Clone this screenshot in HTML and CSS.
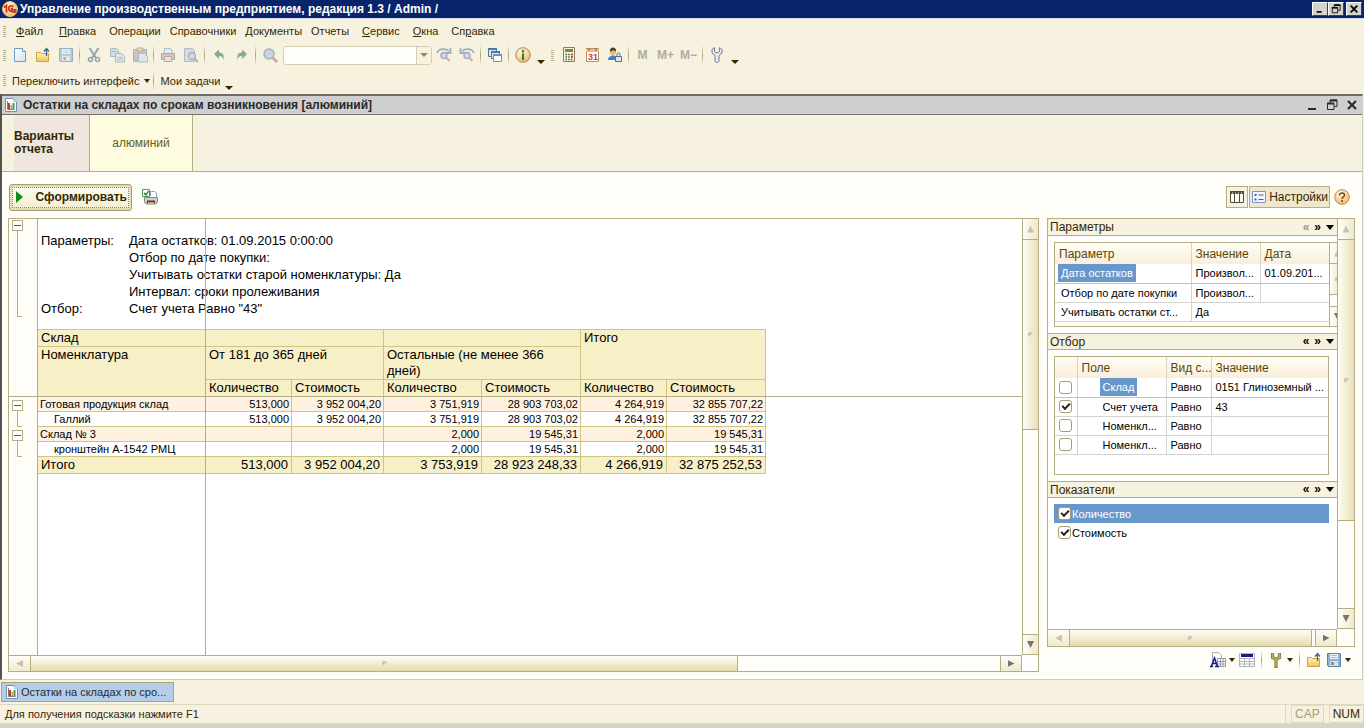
FILE: index.html
```html
<!DOCTYPE html>
<html lang="ru">
<head>
<meta charset="utf-8">
<title>Управление производственным предприятием</title>
<link rel="stylesheet" href="styles.css">
</head>
<body>
<svg class="defs" aria-hidden="true">
  <defs>
    <linearGradient id="paper" x1="0" y1="0" x2="1" y2="1"><stop offset="0" stop-color="#fff"/><stop offset="1" stop-color="#cfe3f5"/></linearGradient>
    <linearGradient id="gold" x1="0" y1="0" x2="0" y2="1"><stop offset="0" stop-color="#fff3c4"/><stop offset="1" stop-color="#eec35c"/></linearGradient>
    <radialGradient id="orb" cx=".4" cy=".3" r=".8"><stop offset="0" stop-color="#fffbe8"/><stop offset="1" stop-color="#eeaf5e"/></radialGradient>
    <symbol id="i-report" viewBox="0 0 12 14"><path d="M.5.5h8l3 3v10H.5z" fill="#fff" stroke="#6f8fb5"/><path d="M8.500.5v3h3" fill="#dbe8f6" stroke="#a9c2de"/><path d="M2.500 3v8.500h7" fill="none" stroke="#8c7b6d"/><path d="M3 5h2v6H3z" fill="#c33b2a"/><path d="M5.500 7h1.500v4H5.500z" fill="#dd8a63"/><path d="M7.500 5h2v6h-2z" fill="#3f9b4a"/></symbol>
    <symbol id="i-folder" viewBox="0 0 16 16"><path d="M1.500 5.500h4l1 1h7v8h-12z" fill="url(#gold)" stroke="#d3a23c"/><path d="M11.500 9V2M9 4.500 11.500 1.500 14 4.500" fill="none" stroke="#3d6688" stroke-width="1.300"/></symbol>
    <symbol id="i-save" viewBox="0 0 16 16"><path d="M1.500 1.500h13v13h-12l-1-1z" fill="#8db1d3" stroke="#5c83aa"/><path d="M4 2h8v5H4z" fill="#eef4fa"/><path d="M5 3.500h6M5 5.500h6" stroke="#9fb9d1"/><path d="M4 9h8v5H4z" fill="#d7e4e2"/><path d="M5.500 10h2v3h-2z" fill="#557591"/></symbol>
    <symbol id="i-findagain" viewBox="0 0 16 16"><path d="M1 6C3 1.500 9 1 13 4M14.500 1v5H9.500" fill="none" stroke="#6787a8" stroke-width="1.800"/><circle cx="8" cy="8.500" r="3" fill="#b9cae6" stroke="#6f7fac" stroke-width="1.400"/><path d="m10.500 11 3 3" stroke="#a88378" stroke-width="2"/></symbol>
    <symbol id="i-restore" viewBox="0 0 12 12"><path d="M4 1h7v6.500H8.500M4 1v3M1.500 4.500h6.500v6H1.500z" fill="none" stroke="currentColor" stroke-width="1"/><path d="M4 1.500h7M1 4.500h7" stroke="currentColor" stroke-width="2"/></symbol>
    <symbol id="i-cross" viewBox="0 0 12 12"><path d="m2 2 8 8M10 2l-8 8" stroke="currentColor" stroke-width="2.200"/></symbol>
  </defs>
</svg>

<header class="titlebar">
  <svg class="logo" viewBox="0 0 16 16"><circle cx="8" cy="8" r="7.500" fill="url(#orb)" stroke="#f5c451"/><path d="M2 6.500 4.500 4.500v7M11.500 5.500C8 3.500 6.500 6 6.800 8s2.700 3 7.700 2.800M11 7.500C8.500 7 8.500 9 14.500 8.800" fill="none" stroke="#d52b1c" stroke-width="1.700"/></svg>
  <h1>Управление производственным предприятием, редакция 1.3 / Admin /</h1>
  <div class="sysbuttons">
    <button aria-label="Свернуть"><svg viewBox="0 0 12 12"><path d="M2 9.500h6" stroke="#000" stroke-width="2"/></svg></button>
    <button aria-label="Восстановить"><svg><use href="#i-restore"/></svg></button>
    <button class="apart" aria-label="Закрыть"><svg><use href="#i-cross"/></svg></button>
  </div>
</header>

<nav class="bar menu">
  <span class="grip"></span>
  <button class="lead"><u>Ф</u>айл</button><button><u>П</u>равка</button><button class="tight">Операции</button><button class="tight">Справочники</button><button class="tight">Документы</button><button>Отчеты</button><button><u>С</u>ервис</button><button><u>О</u>кна</button><button>Сп<u>р</u>авка</button>
</nav>

<div class="bar tools">
  <span class="grip"></span>
  <button aria-label="Новый"><svg viewBox="0 0 16 16"><path d="M2.500 1.500h8l3 3v10h-11z" fill="url(#paper)" stroke="#6f9cc4"/><path d="M10.500 1.500v3h3" fill="#fff" stroke="#6f9cc4"/></svg></button>
  <button aria-label="Открыть"><svg><use href="#i-folder"/></svg></button>
  <button class="off" aria-label="Сохранить"><svg><use href="#i-save"/></svg></button>
  <span class="sep"></span>
  <button class="off" aria-label="Вырезать"><svg viewBox="0 0 16 16"><path d="M3.500 1 10 11M12.500 1 6 11" stroke="#4d7295" stroke-width="2"/><circle cx="4.500" cy="12.500" r="2" fill="none" stroke="#4d7295" stroke-width="1.500"/><circle cx="11.500" cy="12.500" r="2" fill="none" stroke="#4d7295" stroke-width="1.500"/></svg></button>
  <button class="off" aria-label="Копировать"><svg viewBox="0 0 16 16"><path d="M1.500 1.500h6l2 2v6h-8z" fill="#bcd0e8" stroke="#7895bb"/><path d="M6.500 6.500h6l3 3v5.500h-9z" fill="#d4e1f0" stroke="#7895bb"/><path d="M8.500 10.500h5M8.500 12.500h5M3 4.500h4" stroke="#7895bb"/></svg></button>
  <button class="off" aria-label="Вставить"><svg viewBox="0 0 16 16"><path d="M1.500 2.500h13v12h-13z" fill="#a5a5b3" stroke="#8a8492"/><path d="M5 1h6v3H5z" fill="#d7cba7" stroke="#94886d"/><path d="M6.500 6.500h6l3 3v5.500h-9z" fill="#d4e1f0" stroke="#7895bb"/></svg></button>
  <span class="sep"></span>
  <button class="off" aria-label="Печать"><svg viewBox="0 0 16 16"><path d="M4.500 6V1.500h6l1.500 1.500v3" fill="#dceafb" stroke="#7697bd"/><path d="M1.500 6.500h13v6h-13z" fill="#bda8a8" stroke="#8a7a82"/><path d="M4.500 9.500h7v5h-7z" fill="#ead9d0" stroke="#8a7a82"/></svg></button>
  <button class="off" aria-label="Просмотр"><svg viewBox="0 0 16 16"><path d="M1.500 1.500h8l2 2v11h-10z" fill="#c3d0df" stroke="#8297b3"/><circle cx="9" cy="9" r="3.500" fill="#b9cae6" stroke="#6f7fac" stroke-width="1.300"/><path d="m11.500 11.500 3.500 3.500" stroke="#a87868" stroke-width="2"/></svg></button>
  <span class="sep"></span>
  <button class="off" aria-label="Отменить"><svg viewBox="0 0 16 16"><path d="M3 7 8 2.500v3C12 5.500 13.500 8 12.500 13 12 10 11 9 8 9v3z" fill="#457a60"/></svg></button>
  <button class="off" aria-label="Вернуть"><svg viewBox="0 0 16 16"><path d="M13 7 8 2.500v3C4 5.500 2.500 8 3.500 13 4 10 5 9 8 9v3z" fill="#457a60"/></svg></button>
  <span class="sep"></span>
  <button class="off" aria-label="Найти"><svg viewBox="0 0 16 16"><circle cx="7" cy="7" r="5" fill="#a9bfe2" stroke="#7286b4" stroke-width="1.500"/><path d="m10.500 10.500 4.500 4.500" stroke="#a87868" stroke-width="2.500"/></svg></button>
  <div class="combo"><input type="text" aria-label="Поиск"><button aria-label="Список"><i class="down"></i></button></div>
  <button class="off" aria-label="Найти далее"><svg><use href="#i-findagain"/></svg></button>
  <button class="off" aria-label="Найти ранее"><svg viewBox="0 0 16 16"><path d="M15 6C13 1.500 7 1 3 4M1.500 1v5h5" fill="none" stroke="#6787a8" stroke-width="1.800"/><circle cx="8" cy="8.500" r="3" fill="#b9cae6" stroke="#6f7fac" stroke-width="1.400"/><path d="m10.500 11 3 3" stroke="#a88378" stroke-width="2"/></svg></button>
  <span class="sep"></span>
  <button aria-label="Окна"><svg viewBox="0 0 16 16"><path d="M1.500 1.500h8v8h-8z" fill="#d7e6f4" stroke="#54799d"/><path d="M1 2h9" stroke="#54799d" stroke-width="2"/><path d="M4.500 4.500h8v7h-8z" fill="#e7f0f8" stroke="#54799d"/><path d="M4 5h9" stroke="#54799d" stroke-width="2"/><path d="M6.500 7.500h8v7h-8z" fill="#fff" stroke="#6f93b5"/><path d="M6 8h9" stroke="#6f93b5" stroke-width="2"/></svg></button>
  <span class="sep"></span>
  <button aria-label="Справка"><svg viewBox="0 0 16 16"><circle cx="8" cy="8" r="7.300" fill="url(#orb)" stroke="#a98b5a"/><path d="M8 3v2.500M8 6.500v6.500" stroke="#3f7d2c" stroke-width="2.200"/></svg></button>
  <button class="more" aria-label="Ещё"><i class="down"></i></button>
  <span class="grip second"></span>
  <button aria-label="Калькулятор"><svg viewBox="0 0 16 16"><path d="M2.500.5h11v14h-11z" fill="#fff2dc" stroke="#8d7b68"/><path d="M4 2h8v3H4z" fill="#5f9748"/><path d="M4.500 7.500h7M4.500 10h7M4.500 12.500h7" stroke="#2f6b2f" stroke-width="1.500" stroke-dasharray="1.500 1.200"/><path d="M10 7.500h2M10 10h2" stroke="#c84b2f" stroke-width="1.500"/></svg></button>
  <button aria-label="Календарь"><svg viewBox="0 0 16 16"><path d="M2.500 1.500h12v13h-12z" fill="#fff" stroke="#b98c66"/><path d="M2 2h13v3H2z" fill="#e9c08d"/><path d="M5 1v3M12 1v3" stroke="#8c6040"/><text x="4" y="13" class="cal">31</text></svg></button>
  <button aria-label="Пользователь"><svg viewBox="0 0 16 16"><circle cx="6" cy="5" r="3" fill="#f0b86c"/><path d="M3 5c-1-6 7-6 6 0C8 3 5 3 3 5z" fill="#513b2c"/><path d="M1 13c0-6 10-6 10 0z" fill="#3f86b8"/><path d="M8.500 9.500h6v5h-6z" fill="#dce6f1" stroke="#536f91"/><path d="M10 9V7c0-1.500 3-1.500 3 0v2" fill="none" stroke="#536f91"/></svg></button>
  <span class="sep"></span>
  <button class="mem">M</button><button class="mem">M+</button><button class="mem">M−</button>
  <span class="sep"></span>
  <button aria-label="Настройка"><svg viewBox="0 0 16 16"><path d="M5.500.6 3 2.500v3.500L6 8.500V14c0 2 4 2 4 0V8.500L13 6V2.500L10.500.6V4.500L9 5.500H7l-1.500-1z" fill="#e4e7ee" stroke="#7a7f8c"/></svg></button>
  <button class="more" aria-label="Ещё"><i class="down"></i></button>
</div>

<div class="bar tasks">
  <span class="grip"></span>
  <button class="textbtn">Переключить интерфейс<i class="down"></i></button>
  <span class="sep"></span>
  <button class="textbtn second">Мои задачи</button>
  <button class="more" aria-label="Ещё"><i class="down"></i></button>
</div>

<main class="window">
  <header class="caption">
    <svg class="doc"><use href="#i-report"/></svg>
    <h2>Остатки на складах по срокам возникновения [алюминий]</h2>
    <div class="capbuttons">
      <button aria-label="Свернуть"><svg viewBox="0 0 12 12"><path d="M2 10h8" stroke="currentColor" stroke-width="2"/></svg></button>
      <button aria-label="Восстановить"><svg><use href="#i-restore"/></svg></button>
      <button aria-label="Закрыть"><svg><use href="#i-cross"/></svg></button>
    </div>
  </header>

  <div class="variants">
    <strong>Варианты отчета</strong>
    <button>алюминий</button>
  </div>

  <div class="actions">
    <button class="run"><i></i><span>Сформировать</span></button>
    <button class="flat" aria-label="Печать"><svg viewBox="0 0 16 16"><path d="M8.500 7V2.500h4l2 1.500v4" fill="#fff" stroke="#8b9db5"/><path d="M2.500 8.500h13v5l-2 1.500h-9l-2-1.500z" fill="#d2cdca" stroke="#8f8a86"/><path d="M5 11.500h8v3H5z" fill="#454140"/><path d="M6 14h6" stroke="#f0c27a" stroke-width="1.500"/><path d="M.5.500h7v7h-7z" fill="#fff" stroke="#4f9b5b"/><path d="m2 4 2 2 2.500-4" fill="none" stroke="#17762a" stroke-width="1.400"/></svg></button>
    <div class="right">
      <button class="toggle" aria-label="Панель"><svg viewBox="0 0 16 16"><path d="M1.500 2.500h13v11h-13z" fill="#fffef6" stroke="#504a3c"/><path d="M1 3.500h14" stroke="#504a3c" stroke-width="3" stroke-dasharray="2.500 .5"/><path d="M5.500 5v8M10.500 5v8" stroke="#504a3c"/></svg></button>
      <button class="toggle wide"><svg viewBox="0 0 16 16"><path d="M1.500 2.500h13v11h-13z" fill="#f4f7ff" stroke="#7e93c8"/><path d="M3.500 5h2v2h-2zM3.500 9.500h2v2h-2z" fill="#3e5fae"/><path d="M7.500 6h5M7.500 10.500h5" stroke="#555b78"/></svg>Настройки</button>
      <button class="flat" aria-label="Помощь"><svg viewBox="0 0 16 16"><circle cx="8" cy="8" r="7.300" fill="url(#orb)" stroke="#c48a50"/><path d="M5.500 6.500C5.500 3 10.800 3.500 10.500 6.300 10.300 7.800 8 8 8 10M8 11v2" fill="none" stroke="#844612" stroke-width="1.500"/></svg></button>
    </div>
  </div>

  <div class="workspace">
    <section class="report">
      <div class="outline">
        <span class="node head"></span><span class="node first"></span><span class="node next"></span>
      </div>
      <div class="sheet">
        <dl class="params">
          <dt>Параметры:</dt>
          <dd>Дата остатков: 01.09.2015 0:00:00</dd><dd>Отбор по дате покупки:</dd><dd>Учитывать остатки старой номенклатуры: Да</dd><dd>Интервал: сроки пролеживания</dd>
          <dt>Отбор:</dt><dd>Счет учета Равно "43"</dd>
        </dl>
        <table class="data">
          <colgroup><col class="c1"><col class="c2"><col class="c3"><col class="c4"><col class="c5"><col class="c2"><col class="c5"></colgroup>
          <thead>
            <tr><th>Склад</th><th colspan="2"></th><th colspan="2"></th><th colspan="2" rowspan="2">Итого</th></tr>
            <tr class="tall"><th rowspan="2">Номенклатура</th><th colspan="2">От 181 до 365 дней</th><th colspan="2">Остальные (не менее 366 дней)</th></tr>
            <tr><th>Количество</th><th>Стоимость</th><th>Количество</th><th>Стоимость</th><th>Количество</th><th>Стоимость</th></tr>
          </thead>
          <tbody>
            <tr class="group"><td>Готовая продукция склад</td><td>513,000</td><td>3 952 004,20</td><td>3 751,919</td><td>28 903 703,02</td><td>4 264,919</td><td>32 855 707,22</td></tr>
            <tr class="item"><td>Галлий</td><td>513,000</td><td>3 952 004,20</td><td>3 751,919</td><td>28 903 703,02</td><td>4 264,919</td><td>32 855 707,22</td></tr>
            <tr class="group"><td>Склад № 3</td><td></td><td></td><td>2,000</td><td>19 545,31</td><td>2,000</td><td>19 545,31</td></tr>
            <tr class="item"><td>кронштейн А-1542 РМЦ</td><td></td><td></td><td>2,000</td><td>19 545,31</td><td>2,000</td><td>19 545,31</td></tr>
          </tbody>
          <tfoot><tr><td>Итого</td><td>513,000</td><td>3 952 004,20</td><td>3 753,919</td><td>28 923 248,33</td><td>4 266,919</td><td>32 875 252,53</td></tr></tfoot>
        </table>
      </div>
      <i class="freeze-v"></i><i class="freeze-h"></i>
      <div class="vscroll"><b class="up off"></b><span class="thumb"></span><span class="track"></span><b class="dn"></b></div>
      <div class="hscroll"><b class="lf off"></b><span class="thumb"></span><span class="track"></span><b class="rt"></b></div>
    </section>

    <aside class="settings">
      <div class="panel">
        <div class="panes">
          <h3>Параметры<span class="ctl"><button class="off" aria-label="Назад">«</button><button aria-label="Вперёд">»</button><button aria-label="Меню"><i class="down"></i></button></span></h3>
          <div class="box clip">
            <table class="grid g1">
              <colgroup><col class="a"><col class="b"><col class="b"></colgroup>
              <thead><tr><th>Параметр</th><th>Значение</th><th>Дата</th></tr></thead>
              <tbody>
                <tr class="cur"><td><mark>Дата остатков</mark></td><td>Произвол...</td><td>01.09.201...</td></tr>
                <tr><td>Отбор по дате покупки</td><td>Произвол...</td><td></td></tr>
                <tr><td>Учитывать остатки ст...</td><td colspan="2">Да</td></tr>
              </tbody>
            </table>
            <div class="vscroll"><b class="up off"></b><span class="thumb"></span><span class="track"></span><b class="dn"></b></div>
          </div>
          <h3>Отбор<span class="ctl"><button aria-label="Назад">«</button><button aria-label="Вперёд">»</button><button aria-label="Меню"><i class="down"></i></button></span></h3>
          <div class="box filter">
            <table class="grid g2">
              <colgroup><col class="a"><col class="b"><col class="c"><col></colgroup>
              <thead><tr><th></th><th>Поле</th><th>Вид с...</th><th>Значение</th></tr></thead>
              <tbody>
                <tr class="cur"><td><input type="checkbox" aria-label="Склад"></td><td><mark>Склад</mark></td><td>Равно</td><td>0151 Глиноземный ...</td></tr>
                <tr><td><input type="checkbox" checked aria-label="Счет учета"></td><td>Счет учета</td><td>Равно</td><td>43</td></tr>
                <tr><td><input type="checkbox" aria-label="Номенклатура"></td><td>Номенкл...</td><td>Равно</td><td></td></tr>
                <tr><td><input type="checkbox" aria-label="Номенклатура"></td><td>Номенкл...</td><td>Равно</td><td></td></tr>
              </tbody>
            </table>
          </div>
          <h3>Показатели<span class="ctl"><button aria-label="Назад">«</button><button aria-label="Вперёд">»</button><button aria-label="Меню"><i class="down"></i></button></span></h3>
          <div class="measures">
            <label class="sel"><input type="checkbox" checked>Количество</label>
            <label><input type="checkbox" checked>Стоимость</label>
          </div>
        </div>
        <div class="vscroll"><b class="up off"></b><span class="thumb"></span><span class="track"></span><b class="dn"></b></div>
        <div class="hscroll"><b class="lf off"></b><span class="thumb"></span><span class="track"></span><b class="rt"></b></div>
      </div>
      <div class="sidetools">
        <button aria-label="Шрифт"><svg viewBox="0 0 16 16"><path d="M2.500.5h6l3 3v8h-9z" fill="#fff" stroke="#a9a9b5"/><path d="M7.500 6.500h8v8h-8zM7.500 9.500h8M7.500 12h8M10.500 6.500v8M13 6.500v8" fill="#fff" stroke="#9a9aa8"/><path d="M0 14.500h3M5 14.500h4M1.500 14 4.500 6l2.800 8M2.500 11.500h4" fill="none" stroke="#1b1b86" stroke-width="1.500"/></svg><i class="down"></i></button>
        <button aria-label="Таблица"><svg viewBox="0 0 16 16"><path d="M.5 1.500h15v13H.5z" fill="#fff" stroke="#b3b3bd"/><path d="M1 6.500h14M1 9.500h14M1 12h14M5.500 6v8M10.500 6v8" stroke="#b3b3bd"/><path d="M2 3.500h12" stroke="#1b1b86" stroke-width="3"/></svg></button>
        <span class="sep"></span>
        <button aria-label="Настройка"><svg viewBox="0 0 16 16"><path d="M4.500 1v4.500l3.500 2 3.500-2V1M8 7v9" fill="none" stroke="#84803a" stroke-width="3.200"/><path d="M4.500 1.500v4l3.500 2 3.500-2v-4M8 8v7" fill="none" stroke="#bdb65a" stroke-width="1.300"/></svg><i class="down"></i></button>
        <span class="sep"></span>
        <button aria-label="Открыть"><svg><use href="#i-folder"/></svg></button>
        <button aria-label="Сохранить"><svg><use href="#i-save"/></svg><i class="down"></i></button>
      </div>
    </aside>
  </div>
</main>

<nav class="taskbar"><button><svg class="doc"><use href="#i-report"/></svg>Остатки на складах по сро...</button></nav>
<footer class="status"><p>Для получения подсказки нажмите F1</p><span class="dim">CAP</span><span>NUM</span></footer>
</body>
</html>
```
FILE: styles.css
```css
*, *::before, *::after { box-sizing: border-box; }
html, body { height: 100%; }
body {
  margin: 0;
  display: flex;
  flex-direction: column;
  font: 11px/14px "Liberation Sans", Arial, sans-serif;
  color: #332900;
  background: #f7f1df;
  border-bottom: 4px solid #d8d4cc;
  overflow: hidden;
}
button { font: inherit; color: inherit; background: none; border: 0; padding: 0; margin: 0; }
h1, h2, h3, p, dl, dd { margin: 0; font-size: inherit; }
svg { display: block; width: 16px; height: 16px; flex: none; }
.defs { position: absolute; width: 0; height: 0; }
.down { display: block; width: 0; height: 0; border: 3px solid transparent; border-top: 4px solid #332900; border-bottom: 0; }

.titlebar { flex: none; height: 19px; display: flex; align-items: center; gap: 2px; padding: 0 2px; background: #08246b; border-bottom: 1px solid #d6dae6; color: #fff; }
.titlebar h1 { flex: 1; font-size: 12px; font-weight: bold; }
.sysbuttons { display: flex; }
.sysbuttons button { width: 16px; height: 14px; background: #d6d3ce; border: 1px solid; border-color: #fff #404040 #404040 #fff; display: grid; place-items: center; color: #000; }
.sysbuttons svg { width: 10px; height: 10px; }
.sysbuttons .apart { margin-left: 2px; }

.bar { flex: none; display: flex; align-items: center; padding-left: 3px; }
.menu { height: 24px; gap: 13px; }
.menu .grip { margin-right: -3px; }
.menu .lead { margin-right: 3px; }
.menu .tight { margin-right: -4px; }
.grip { width: 3px; height: 11px; margin-right: 2px; background: repeating-linear-gradient(#b9b08c 0 1px, transparent 1px 2px); }
.grip.second { margin: 0 3px 0 4px; }
.tools { height: 24px; }
.tools > button { width: 23px; height: 22px; display: grid; place-items: center; }
.off > svg { opacity: .6; }
.sep { width: 1px; height: 20px; margin: 0 2px; background: linear-gradient(transparent, #aaa27c, transparent); }
.tools > .more, .tasks > .more { width: 13px; height: 22px; display: grid; place-items: end center; padding-bottom: 2px; }
.more .down { border-width: 4px 4px 0; }
.combo { width: 149px; height: 19px; margin-left: 2px; display: flex; border: 1px solid #d5cfb2; border-radius: 3px; background: #fffdf9; }
.combo input { flex: 1; min-width: 0; border: 0; background: none; padding: 0 3px; font: inherit; }
.combo button { width: 15px; display: grid; place-items: center; border-left: 1px solid #d5cfb2; background: #f7f1df; }
.combo .down { border-width: 4px 4px 0; border-top-color: #8d8670; }
.cal { font: bold 9px "Liberation Sans", Arial, sans-serif; fill: #d83a22; }
.tools .mem { font-weight: bold; font-size: 12px; color: #b3aba0; }
.tasks { height: 27px; }
.textbtn { display: flex; align-items: center; gap: 4px; padding: 0 1px 0 4px; font-size: 11px; }
.textbtn.second { padding: 0 2px 0 5px; }

.window { flex: 1; min-height: 0; display: flex; flex-direction: column; margin-right: 1px; border: 1px solid #cfcbc0; border-left: 2px solid #55534f; border-top: 2px solid #6d6b66; background: #fffdf7; }
.caption { flex: none; height: 19px; display: flex; align-items: center; gap: 6px; padding: 0 4px 0 3px; background: #cfcfcf; border-bottom: 1px solid #77746a; color: #2a2a2a; }
.doc { width: 12px; height: 14px; }
.caption h2 { flex: 1; font-size: 12px; }
.capbuttons { display: flex; gap: 8px; }
.capbuttons svg { width: 12px; height: 12px; }

.variants { flex: none; height: 57px; display: flex; padding-left: 12px; background: #f7f1df; border-bottom: 1px solid #b5ad84; }
.variants strong { width: 76px; display: flex; align-items: center; background: #efe6e0; border-right: 1px solid #b5ad84; line-height: 13px; font-size: 12px; }
.variants button { width: 103px; background: #fffbde; border-right: 1px solid #b5ad84; color: #665c2a; font-size: 12px; }

.actions { flex: none; height: 46px; display: flex; align-items: center; padding: 4px 12px 0 7px; }
.run { width: 123px; height: 27px; display: flex; align-items: center; justify-content: space-between; padding: 0 4px 0 6px; border: 1px solid #a69d72; border-radius: 3px; background: linear-gradient(#fffdf5, #f3ecd0); outline: 1px dotted #8f875c; outline-offset: -4px; box-shadow: inset 0 0 0 2px #e4dcb8; font-weight: bold; font-size: 12px; }
.run i { border: 6px solid transparent; border-left: 7px solid #138a1c; border-right: 0; }
.flat { width: 16px; height: 16px; margin-left: 10px; }
.right { margin-left: auto; display: flex; align-items: center; gap: 1px; }
.right .flat { margin-left: 3px; }
.toggle { height: 22px; display: flex; align-items: center; gap: 2px; padding: 0 2px; border: 1px solid #b5ad84; background: #efe8cf; font-size: 12px; }
.toggle.wide { padding: 0 1px; }
.toggle:first-child { width: 22px; background: #f7f1df; }

.workspace { flex: 1; min-height: 0; display: flex; gap: 8px; padding: 0 7px 7px 6px; }
.report { position: relative; flex: 1; min-width: 0; display: grid; grid-template: 1fr 16px / 29px 1fr 16px; border: 1px solid #b5ad84; background: #fff; }
.outline { background: #fffdf7; border-right: 1px solid #b5ad84; display: flex; flex-direction: column; padding: 1px 0 0 3px; }
.node { width: 11px; padding-left: 5px; }
.node::before { content: ""; display: block; width: 11px; height: 11px; margin-left: -5px; border: 1px solid #b5ad84; background: linear-gradient(#665c2a, #665c2a) center / 7px 1px no-repeat #fff; }
.node::after { content: ""; display: block; width: 5px; border: solid #b5ad84; border-width: 0 0 1px 1px; height: 16px; }
.node.head::after { height: 86px; }
.node.first { margin-top: 83px; }
.node.next { margin-top: 3px; }
.sheet { min-width: 0; overflow: hidden; color: #000; padding-top: 13px; }
.params { display: grid; grid-template-columns: 88px 1fr; font-size: 13px; line-height: 17px; padding-left: 3px; margin-bottom: 12px; }
.params dd { grid-column: 2; white-space: nowrap; }
.data { border-collapse: collapse; table-layout: fixed; width: 729px; margin-left: -1px; }
.c1 { width: 168px; } .c2 { width: 86px; } .c3 { width: 92px; } .c4 { width: 98px; } .c5 { width: 99px; }
.data th, .data td { border: 1px solid #cfc486; padding: 0 3px; vertical-align: top; white-space: nowrap; overflow: hidden; }
.data th { height: 17px; font-weight: normal; font-size: 13px; line-height: 16px; text-align: left; background: #f7efc6; white-space: normal; }
.data .tall th { height: 33px; }
.data td { height: 15px; line-height: 14px; text-align: right; padding: 0 2px; }
.data td:first-child { text-align: left; }
.data .group td { background: #fff1e0; }
.data .item td:first-child { padding-left: 16px; }
.data tfoot td { height: 17px; line-height: 16px; font-size: 13px; background: #f7efc6; padding: 0 3px; }
.freeze-v { position: absolute; left: 196px; top: 0; bottom: 16px; width: 1px; background: #b5ad84; }
.freeze-h { position: absolute; left: 0; right: 16px; top: 177px; height: 1px; background: #b5ad84; }

.vscroll, .hscroll { display: flex; background: #fffdf7; min-width: 0; min-height: 0; }
.vscroll { flex-direction: column; border-left: 1px solid #b5ad84; }
.hscroll { border-top: 1px solid #b5ad84; }
.vscroll b, .hscroll b { flex: none; display: grid; place-items: center; }
.vscroll b { height: 20px; background: linear-gradient(90deg, #fffdf7, #efe9cd); }
.hscroll b { width: 21px; background: linear-gradient(#fffdf7, #efe9cd); }
.vscroll b::before, .hscroll b::before { content: ""; width: 7px; height: 7px; background: #77736a; }
b.up::before { clip-path: polygon(50% 0, 100% 100%, 0 100%); }
b.dn::before { clip-path: polygon(0 0, 100% 0, 50% 100%); }
b.lf::before { clip-path: polygon(100% 0, 100% 100%, 0 50%); }
b.rt::before { clip-path: polygon(0 0, 100% 50%, 0 100%); }
.vscroll b.off::before, .hscroll b.off::before { background: #c6c1b1; }
.thumb { display: grid; place-items: center; }
.thumb::before { content: ""; width: 5px; height: 5px; border-radius: 3px; background: linear-gradient(135deg, #aaa288, #fffdf7); }
.vscroll .thumb { border: solid #b5ad84; border-width: 1px 0; background: linear-gradient(90deg, #fffdf7, #f3edd3 50%, #e8e0bb); }
.hscroll .thumb { border: solid #b5ad84; border-width: 0 1px; background: linear-gradient(#fffdf7, #f3edd3 50%, #e3daad); }
.track { flex: 1; }
.vscroll .dn { border-top: 1px solid #b5ad84; }
.hscroll .rt { border-left: 1px solid #b5ad84; }
.report > .vscroll .thumb { flex: 0 0 44%; }
.report > .vscroll { grid-column: 3; grid-row: 1; border-bottom: 1px solid #b5ad84; }
.report > .hscroll { grid-column: 1 / 3; grid-row: 2; border-right: 1px solid #b5ad84; }
.report > .hscroll .thumb { flex: 0 0 70%; }

.settings { flex: 0 0 308px; display: flex; flex-direction: column; }
.panel { flex: 1; min-height: 0; display: grid; grid-template: 1fr 17px / 1fr 17px; border: 1px solid #b5ad84; }
.panes { min-width: 0; overflow: hidden; background: #fff; display: flex; flex-direction: column; }
.panel > .vscroll .thumb { flex: 0 0 69%; }
.panel > .vscroll { border-bottom: 1px solid #b5ad84; }
.panel > .hscroll { border-right: 1px solid #b5ad84; }
.panel > .hscroll .thumb { flex: 0 0 243px; }
.panes h3 { flex: none; height: 17px; display: flex; align-items: center; justify-content: space-between; padding: 0 3px 0 2px; background: #f7f1df; border-bottom: 1px solid #b5ad84; font-weight: normal; font-size: 12px; }
.panes h3:not(:first-child) { border-top: 1px solid #b5ad84; }
.ctl { display: flex; align-items: center; gap: 5px; font-weight: bold; color: #000; font-size: 12px; line-height: 13px; }
.ctl .off { color: #9c9888; }
.ctl .down { border-width: 5px 4px 0; border-top-color: #000; }
.box { flex: none; margin: 6px 8px 6px 6px; border: 1px solid #b5ad84; }
.box.clip { height: 85px; margin-right: 0; border-right: 0; display: flex; overflow: hidden; }
.clip .vscroll { flex: none; width: 9px; overflow: hidden; }
.clip .vscroll b { width: 15px; }
.clip .thumb { flex: 0 0 32px; width: 15px; }
.filter { height: 119px; }
.grid { border-collapse: collapse; table-layout: fixed; width: 100%; color: #000; }
.g1 { flex: 1; height: 78px; }
.grid th { height: 21px; padding: 0 0 0 4px; text-align: left; font-weight: normal; color: #5a4508; background: linear-gradient(#fffdf5, #faeedb); border-left: 1px solid #ddd3b6; font-size: 12px; white-space: nowrap; }
.grid td { height: 19px; padding: 0 0 0 4px; border: 1px solid #d3d3cf; border-width: 0 0 1px 1px; white-space: nowrap; overflow: hidden; }
.grid tr > :first-child { border-left: 0; }
.grid .cur td { border-bottom-color: #a9c6e8; }
.g1 .a { width: 136px; } .g1 .b { width: 69px; }
.g1 td:first-child { padding-left: 6px; }
.grid mark { display: inline-block; line-height: 18px; padding: 0 3px; margin-left: -3px; background: #6897cc; color: #fff; vertical-align: top; }
.g2 .a { width: 22px; } .g2 .b { width: 89px; } .g2 .c { width: 45px; }
.g2 td:nth-child(2) { padding-left: 25px; }
.g2 td:first-child { border-right: 1px solid #d3d3cf; }
input[type="checkbox"] { appearance: none; flex: none; display: grid; place-items: center; width: 13px; height: 13px; margin: 0; border: 1px solid #a69d72; border-radius: 3px; background: #fff; }
input[type="checkbox"]:checked::before { content: ""; width: 8px; height: 5px; border: solid #222; border-width: 0 0 2px 2px; transform: translateY(-1px) rotate(-45deg); }
.measures { flex: 1; margin: 6px 8px 0 6px; color: #000; }
.measures label { height: 19px; display: flex; align-items: center; gap: 1px; padding-left: 4px; }
.measures .sel { background: #6897cc; color: #fff; }
.sidetools { flex: none; height: 25px; display: flex; align-items: center; justify-content: flex-end; gap: 4px; padding-right: 4px; }
.sidetools button { display: flex; align-items: center; gap: 3px; }

.taskbar { flex: none; height: 25px; padding: 2px 1px; border-bottom: 1px solid #ddd8c0; }
.taskbar button { width: 173px; height: 20px; display: flex; align-items: center; gap: 3px; padding: 0 4px; background: #b5cde6; border: 1px solid #a9a67f; color: #222b3a; white-space: nowrap; }
.status { flex: none; height: 19px; display: flex; align-items: stretch; gap: 5px; border-bottom: 1px solid #ddd8c0; line-height: 18px; }
.status p { flex: 1; padding-left: 5px; border-right: 1px solid #ddd8c0; }
.status span { padding: 0 3px; border: 1px solid #ddd8c0; line-height: 17px; font-size: 12px; }
.status .dim { color: #a69d72; }
```
